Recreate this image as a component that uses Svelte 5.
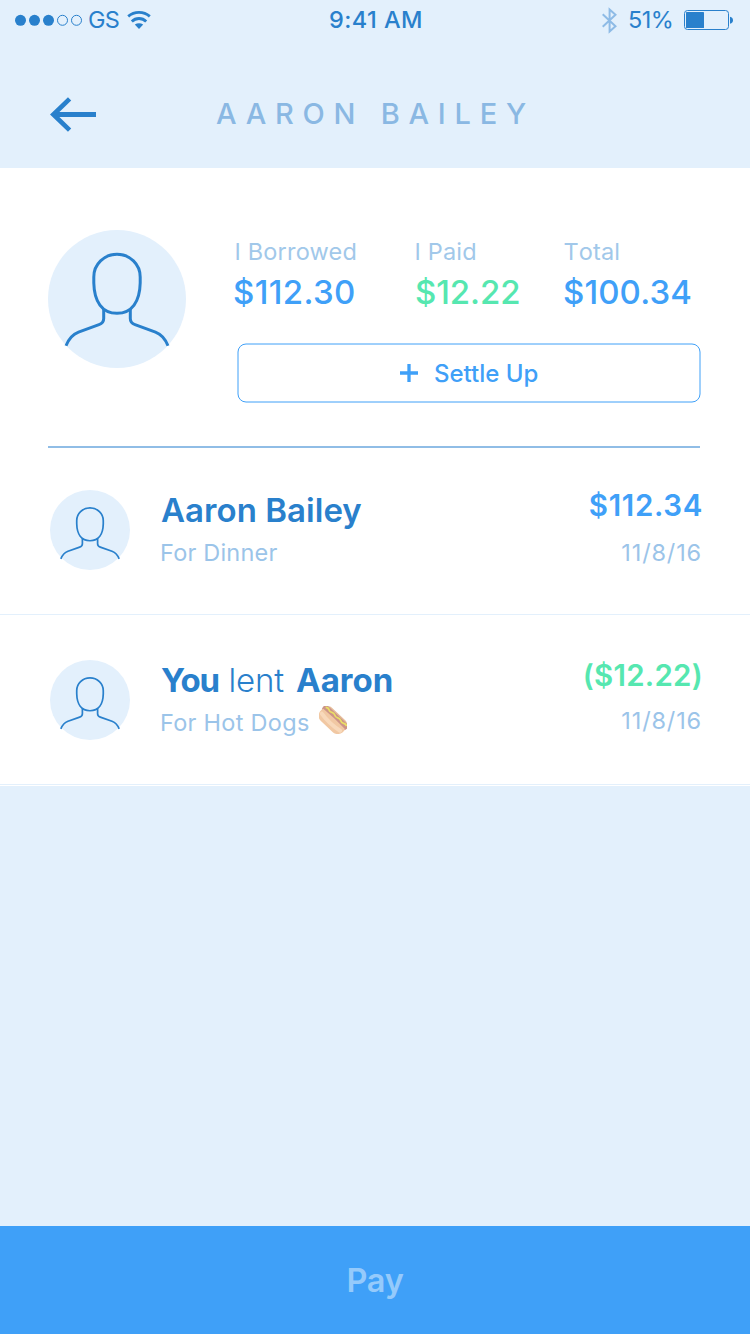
<script>
  const totals = [
    { label: 'I Borrowed', value: '$112.30', tone: 'blue', key: 'borrowed' },
    { label: 'I Paid', value: '$12.22', tone: 'green', key: 'paid' },
    { label: 'Total', value: '$100.34', tone: 'blue', key: 'total' }
  ];
</script>

{#snippet figure()}
  <g fill="none" stroke="#2980cc" stroke-width="3">
    <path d="M69 24.3C56 24.3 45.8 34.3 45.8 47V53C46.2 71.5 54 83.3 69 83.3S91.8 71.5 92.2 53V47C92.2 34.3 82 24.3 69 24.3Z" />
    <path d="M55.7 79V88.5Q55.7 93 51 94.7L30.5 102.2C24.5 104.5 20.5 109.5 18 115.8" />
    <path d="M82.3 79V88.5Q82.3 93 87 94.7L107.5 102.2C113.5 104.5 117.5 109.5 120 115.8" />
  </g>
{/snippet}

{#snippet smallAvatar()}
  <svg class="avatar" width="80" height="80" viewBox="0 0 80 80">
    <circle cx="40" cy="40" r="40" fill="#e3f0fc" />
    <g transform="translate(.53 4.3) scale(.572 .558)">{@render figure()}</g>
  </svg>
{/snippet}

<div class="screen">
  <header>
    <div class="status">
      <div class="side">
        <svg width="68" height="12" viewBox="0 0 68 12" fill="#2980cc">
          <circle cx="5.5" cy="6.3" r="5.5" />
          <circle cx="19.5" cy="6.3" r="5.5" />
          <circle cx="33.5" cy="6.3" r="5.5" />
          <circle cx="47.5" cy="6.3" r="5" fill="none" stroke="#2980cc" />
          <circle cx="61.5" cy="6.3" r="5" fill="none" stroke="#2980cc" />
        </svg>
        <span class="carrier">GS</span>
        <svg class="wifi" width="24" height="20" viewBox="0 0 24 20">
          <g fill="none" stroke="#2980cc" stroke-width="2.8">
            <path d="M1.2 6.4A16.3 16.3 0 0 1 22.8 6.4" />
            <path d="M4.8 11.5A10.2 10.2 0 0 1 19.2 11.5" />
          </g>
          <path d="M7.8 14.5Q12 11.8 16.2 14.5L12 18.9Z" fill="#2980cc" />
        </svg>
      </div>
      <span class="time">9:41 AM</span>
      <div class="side right">
        <svg class="bluetooth" width="17" height="27" viewBox="0 0 17 27">
          <path d="M1.7 7.3L14.5 19.3L8.6 24.6V2.4L14.5 7.7L1.7 19.7" fill="none" stroke="#8ebbe6" stroke-width="2" />
        </svg>
        <span class="percent">51%</span>
        <svg width="50" height="20" viewBox="0 0 50 20">
          <rect x=".5" y=".5" width="44" height="19" rx="3" fill="none" stroke="#2980cc" />
          <rect x="2" y="2" width="18" height="16" rx=".6" fill="#2980cc" />
          <path d="M46 6.8Q49 7.5 49 10.3T46 13.8Z" fill="#2980cc" />
        </svg>
      </div>
    </div>
    <div class="nav">
      <svg width="47" height="36" viewBox="0 0 47 36" fill="none" stroke="#2980cc">
        <path d="M19.6 2.9L3.4 18.5L19.6 34.1" stroke-width="4.7" />
        <path d="M5 18.5H46" stroke-width="5" />
      </svg>
      <h1>AARON BAILEY</h1>
    </div>
  </header>

  <section class="summary">
    <svg class="portrait" width="138" height="138" viewBox="0 0 138 138">
      <circle cx="69" cy="69" r="69" fill="#e3f0fc" />
      {@render figure()}
    </svg>
    <div class="overview">
      <div class="totals">
        {#each totals as t}
          <div class={t.key}>
            <div class="label">{t.label}</div>
            <div class="value {t.tone}">{t.value}</div>
          </div>
        {/each}
      </div>
      <button>
        <svg class="outline" width="464" height="60" viewBox="0 0 464 60">
          <rect x="1" y="1" width="462" height="58" rx="8" fill="none" stroke="#3fa0f8" />
        </svg>
        <svg width="18" height="18" viewBox="0 0 18 18">
          <path d="M9 0V18M0 9H18" stroke="#3fa0f8" stroke-width="3.3" />
        </svg>
        <span>Settle Up</span>
      </button>
    </div>
  </section>

  <ul>
    <li>
      {@render smallAvatar()}
      <div class="what">
        <div class="name">Aaron Bailey</div>
        <div class="note">For Dinner</div>
      </div>
      <div class="when">
        <div class="amount blue">$112.34</div>
        <div class="date">11/8/16</div>
      </div>
    </li>
    <li class="lent">
      {@render smallAvatar()}
      <div class="what">
        <div class="name"><b class="you">You</b> <i>lent</i> <b>Aaron</b></div>
        <div class="note dogs">
          <span>For Hot Dogs</span>
          <svg width="28" height="28" viewBox="0 0 28 28">
            <g transform="rotate(43 14 14)">
              <rect x="0" y="5.8" width="28" height="9" rx="4.5" fill="#e6bd9b" />
              <rect x="-2.2" y="7.2" width="32.4" height="7.6" rx="3.8" fill="#cc9488" />
              <path d="M-.8 12.4Q14 11.4 28.8 12.4C31 17 27.5 23 22.5 23H5.5C.5 23-3 17-.8 12.4Z" fill="#f1c8a3" />
              <path d="M1.5 17Q14 19.4 26.5 17" fill="none" stroke="#f8d9bb" stroke-width="4" stroke-linecap="round" />
              <path d="M0 9.8Q2 8 4 9.2T8 9.2T12 9.2T16 9.2T20 9.2T24 9.2T28 9.2" fill="none" stroke="#eadf66" stroke-width="1.8" />
            </g>
          </svg>
        </div>
      </div>
      <div class="when">
        <div class="amount green">($12.22)</div>
        <div class="date">11/8/16</div>
      </div>
    </li>
  </ul>

  <footer>Pay</footer>
</div>

<style>
  :global(body) { margin: 0; }
  .screen {
    width: 750px;
    height: 1334px;
    display: flex;
    flex-direction: column;
    background: #e3f0fc;
    font-family: Inter, "Liberation Sans", sans-serif;
    color: #2980cc;
    overflow: hidden;
    white-space: nowrap;
  }
  svg { display: block; flex: none; }
  header { height: 168px; }
  .status {
    height: 40px;
    display: grid;
    grid-template-columns: 1fr auto 1fr;
    align-items: center;
    padding: 0 16px 0 15px;
    font-size: 23.5px;
    line-height: 39px;
  }
  .side { display: flex; align-items: center; height: 40px; }
  .side.right { justify-content: flex-end; }
  .carrier { width: 38px; height: 40px; padding-left: 5px; box-sizing: border-box; letter-spacing: -.7px; }
  .wifi { margin-left: 6px; }
  .time { font-weight: 500; letter-spacing: .45px; height: 40px; padding-left: 3px; }
  .bluetooth { margin-right: 10px; }
  .percent { width: 56px; letter-spacing: -.5px; height: 40px; }
  .nav { height: 128px; display: flex; padding: 0 0 0 50px; }
  .nav svg { margin-top: 56px; }
  h1 {
    margin: 44px 0 0 119px;
    font-size: 29px;
    font-weight: 500;
    line-height: 60px;
    height: 60px;
    letter-spacing: 8.75px;
    color: #8ab8e3;
  }

  .summary {
    height: 278px;
    box-sizing: border-box;
    padding: 62px 48px 0;
    background: #fff;
    display: flex;
  }
  .overview { margin-left: 47px; }
  .totals { display: grid; grid-template-columns: 181px 149px auto; padding-top: 1px; }
  .label {
    font-size: 23.5px;
    font-weight: 400;
    line-height: 42px;
    height: 41px;
    letter-spacing: .2px;
    color: #a1c8ea;
    padding-left: 1.4px;
  }
  .paid .label { padding-left: .4px; }
  .total .label { padding-left: .4px; font-kerning: none; }
  .value { font-size: 33px; font-weight: 500; line-height: 40px; }
  .borrowed .value { letter-spacing: .35px; }
  .paid .value { padding-left: 1px; letter-spacing: -.1px; }
  .total .value { letter-spacing: .1px; }
  .blue { color: #3fa0f8; }
  .green { color: #56e7b0; }
  button {
    position: relative;
    width: 464px;
    height: 60px;
    margin: 31px 0 0 4px;
    padding: 0 0 0 163px;
    border: 0;
    background: none;
    display: flex;
    align-items: center;
    gap: 16px;
    font: 500 24px/60px Inter, sans-serif;
    color: #3fa0f8;
  }
  button span { padding-top: 2px; }
  .outline { position: absolute; left: 0; top: 0; }

  ul { list-style: none; margin: 0; padding: 0 0 1px; background: #fff; }
  ul::before { content: ""; display: block; height: 2px; margin: 0 50px 0 48px; background: #90bde6; }
  li {
    height: 170px;
    box-sizing: border-box;
    border-bottom: 1px solid #e3f0fc;
    padding: 45px 49px 0 50px;
    display: flex;
    align-items: flex-start;
  }
  li:first-child { height: 167px; padding-top: 42px; }
  .what { margin-left: 31px; flex: 1; }
  .name { font-size: 33px; font-weight: 600; line-height: 44px; height: 44px; margin-top: -2px; letter-spacing: .05px; }
  .name b { font-weight: 700; }
  .name .you { letter-spacing: -1.1px; margin-right: 1px; }
  .name i { font-style: normal; font-weight: 300; letter-spacing: -.1px; margin-right: 3.5px; }
  .note, .date { font-size: 23.5px; font-weight: 400; line-height: 41px; height: 40px; color: #9bc4e9; }
  .note { margin-left: -1px; letter-spacing: .2px; }
  .dogs { display: flex; align-items: center; letter-spacing: .28px; }
  .dogs svg { margin: -4px 0 0 9px; }
  .when { text-align: right; margin-right: -2px; }
  .amount { font-size: 29.5px; font-weight: 600; line-height: 39px; height: 40px; letter-spacing: .65px; margin-top: -4px; }
  .lent .amount { letter-spacing: .25px; }
  .date { margin-top: 6px; letter-spacing: .85px; margin-right: 1px; }
  .lent .date { margin-top: 4px; }

  footer {
    height: 108px;
    margin-top: auto;
    background: #3fa0f8;
    color: #95cafb;
    font-size: 32.5px;
    font-weight: 600;
    line-height: 109px;
    text-align: center;
    letter-spacing: -.3px;
  }
</style>
